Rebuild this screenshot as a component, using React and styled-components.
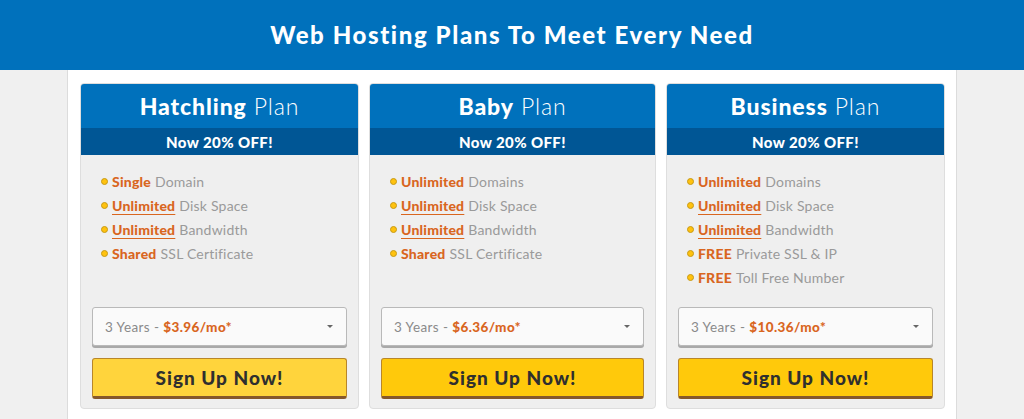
import React from 'react';
import styled, {createGlobalStyle} from 'styled-components';

const GlobalStyle = createGlobalStyle`
    body {
        margin: 0;
        background: #f0f0f0;
        font-family: Lato, "Liberation Sans", sans-serif;
    }
`

const plans = [
    {
        name: 'Hatchling',
        price: '$3.96/mo*',
        light: true,
        features: [
            ['Single', 'Domain'],
            ['Unlimited', 'Disk Space', true],
            ['Unlimited', 'Bandwidth', true],
            ['Shared', 'SSL Certificate'],
        ],
    },
    {
        name: 'Baby',
        price: '$6.36/mo*',
        features: [
            ['Unlimited', 'Domains'],
            ['Unlimited', 'Disk Space', true],
            ['Unlimited', 'Bandwidth', true],
            ['Shared', 'SSL Certificate'],
        ],
    },
    {
        name: 'Business',
        price: '$10.36/mo*',
        features: [
            ['Unlimited', 'Domains'],
            ['Unlimited', 'Disk Space', true],
            ['Unlimited', 'Bandwidth', true],
            ['FREE', 'Private SSL & IP'],
            ['FREE', 'Toll Free Number'],
        ],
    },
];

const App = () => {
    return(
        <>
            <GlobalStyle />
            <Header>
                <h1>Web Hosting Plans To Meet Every Need</h1>
            </Header>
            <Wrap>
                <Grid>
                    {plans.map(plan => (
                        <Card key={plan.name}>
                            <CardTitle>
                                <strong>{plan.name}</strong> Plan
                            </CardTitle>
                            <Deal>Now 20% OFF!</Deal>
                            <Features>
                                {plan.features.map(([hi, rest, link], i) => (
                                    <li key={i}>
                                        <Dot />
                                        <Hi $link={link}>{hi}</Hi> {rest}
                                    </li>
                                ))}
                            </Features>
                            <Bottom>
                                <Select>
                                    <span>3 Years - <b>{plan.price}</b></span>
                                    <Caret />
                                </Select>
                                <SignUp $light={plan.light}>Sign Up Now!</SignUp>
                            </Bottom>
                        </Card>
                    ))}
                </Grid>
            </Wrap>
        </>
    )
}

const Header = styled.header`
    height: 70px;
    background: #0071bc;
    display: flex;
    align-items: center;
    justify-content: center;
    h1 {
        margin: 0 0 2px;
        color: #fff;
        font-size: 24px;
        font-weight: 900;
        letter-spacing: 1.6px;
    }
`
const Wrap = styled.div`
    width: 890px;
    margin: 0 auto;
    box-sizing: border-box;
    background: #fff;
    border-left: 1px solid #dcdcdc;
    border-right: 1px solid #dcdcdc;
    padding: 13px 11px 10px 12px;
`
const Grid = styled.div`
    display: grid;
    grid-template-columns: 279fr 287fr 279fr;
    gap: 10px;
`
const Card = styled.div`
    display: flex;
    flex-direction: column;
    background: #efefef;
    border: 1px solid #dedede;
    border-radius: 4px;
    overflow: hidden;
`
const CardTitle = styled.div`
    background: #0071bc;
    color: #fff;
    height: 44px;
    display: flex;
    align-items: center;
    justify-content: center;
    font-size: 23px;
    font-weight: 300;
    letter-spacing: 0.9px;
    gap: 7px;
    strong {
        font-weight: 900;
    }
`
const Deal = styled.div`
    background: #005695;
    color: #fff;
    height: 27px;
    display: flex;
    align-items: center;
    justify-content: center;
    font-size: 15px;
    font-weight: 900;
    letter-spacing: 0.4px;
`
const Features = styled.ul`
    list-style: none;
    margin: 0;
    padding: 14px 0 0 20px;
    li {
        display: flex;
        align-items: center;
        gap: 4px;
        height: 24px;
        font-size: 14px;
        letter-spacing: 0.2px;
        color: #9a9a9a;
        white-space: pre;
    }
`
const Dot = styled.span`
    width: 5px;
    height: 5px;
    border-radius: 50%;
    background: #ffc20e;
    border: 1px solid #c79a16;
`
const Hi = styled.span`
    color: #d9661f;
    font-weight: 900;
    text-decoration: ${p => p.$link ? 'underline' : 'none'};
    text-decoration-thickness: 1px;
    text-underline-offset: 3px;
`
const Bottom = styled.div`
    margin-top: auto;
    padding: 18px 11px 9px;
    display: flex;
    flex-direction: column;
    gap: 12px;
`
const Select = styled.div`
    height: 39px;
    box-sizing: border-box;
    display: flex;
    align-items: center;
    justify-content: space-between;
    padding: 0 13px 0 12px;
    background: #fafafa;
    border: 1px solid #b9b9b9;
    border-radius: 3px;
    box-shadow: 0 2px 0 #a9a9a9;
    color: #8a8a8a;
    font-size: 13.5px;
    letter-spacing: 0.4px;
    b {
        color: #d9661f;
        font-weight: 900;
    }
`
const Caret = styled.span`
    width: 0;
    height: 0;
    border-left: 3px solid transparent;
    border-right: 3px solid transparent;
    border-top: 3px solid #666;
`
const SignUp = styled.button`
    height: 41px;
    box-sizing: border-box;
    background: ${p => p.$light ? '#ffd43c' : '#ffc90b'};
    border: 1px solid #b8862a;
    border-bottom: 3px solid #86582a;
    border-radius: 3px;
    color: #2f2f2f;
    font-family: Lato, "Liberation Sans", sans-serif;
    font-size: 19px;
    font-weight: 900;
    letter-spacing: 1px;
    padding: 0 0 1px;
    cursor: pointer;
`

export default App;
